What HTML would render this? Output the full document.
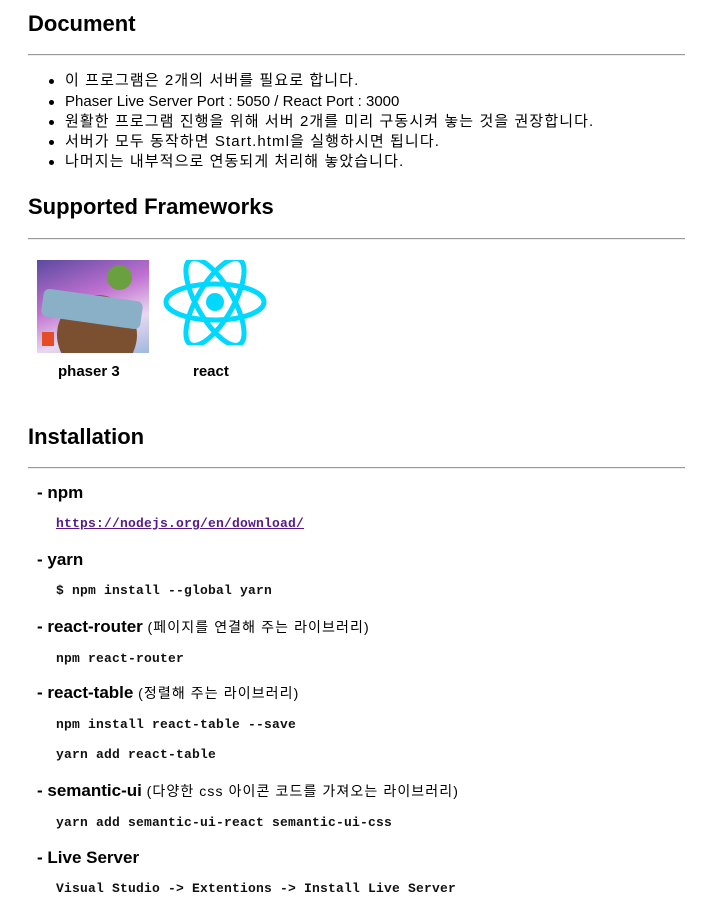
<!DOCTYPE html>
<html><head><meta charset="utf-8"><style>
body{margin:0;width:705px;height:917px;background:#fff;position:relative;font-family:"Liberation Sans","Noto Sans CJK KR",sans-serif;color:#000;overflow:hidden}
.a{position:absolute;white-space:nowrap;line-height:20px}
h2{position:absolute;margin:0;left:28px;font-size:22px;font-weight:bold;line-height:28px}
.hr{position:absolute;left:28px;width:657px;height:1px;background:#999;border-bottom:1px solid #eee}
.li{left:65px;font-size:15px}
.k{letter-spacing:1.1px}
.li:before{content:"";position:absolute;left:-16px;top:8px;width:5px;height:5px;border-radius:50%;background:#000}
.h{left:37px;font-size:17px;font-weight:bold}
.h small{font-size:14px;font-weight:normal;letter-spacing:1.1px}
.c{left:56px;font-family:"Liberation Mono","Noto Sans CJK KR",monospace;font-size:13px;font-weight:bold;color:#111;letter-spacing:0.2px}
a{color:#551a8b}
</style></head><body>
<h2 style="top:10px">Document</h2>
<div class="hr" style="top:54px"></div>
<div class="a li k" style="top:71px">이 프로그램은 2개의 서버를 필요로 합니다.</div>
<div class="a li" style="top:92px">Phaser Live Server Port : 5050 / React Port : 3000</div>
<div class="a li k" style="top:112px">원활한 프로그램 진행을 위해 서버 2개를 미리 구동시켜 놓는 것을 권장합니다.</div>
<div class="a li k" style="top:132px">서버가 모두 동작하면 Start.html을 실행하시면 됩니다.</div>
<div class="a li k" style="top:152px">나머지는 내부적으로 연동되게 처리해 놓았습니다.</div>
<h2 style="top:193px">Supported Frameworks</h2>
<div class="hr" style="top:238px"></div>
<div style="position:absolute;left:37px;top:260px;width:112px;height:93px;background:linear-gradient(160deg,#5a4aa0,#c070d0 40%,#e8d8f0 70%,#a0b8e0);overflow:hidden">
<div style="position:absolute;left:20px;top:35px;width:80px;height:80px;border-radius:50%;background:#7a5030"></div>
<div style="position:absolute;left:5px;top:35px;width:100px;height:28px;background:#8ab0c8;border-radius:6px;transform:rotate(8deg)"></div>
<div style="position:absolute;left:5px;top:72px;width:12px;height:14px;background:#e44d26"></div>
<div style="position:absolute;left:70px;top:5px;width:25px;height:25px;border-radius:50%;background:#6aa040"></div>
</div>
<svg style="position:absolute;left:162px;top:260px" width="106" height="85" viewBox="0 0 106 85">
<g fill="none" stroke="#00d8ff" stroke-width="5"><ellipse cx="53" cy="42" rx="49" ry="18"/><ellipse cx="53" cy="42" rx="49" ry="18" transform="rotate(60 53 42)"/><ellipse cx="53" cy="42" rx="49" ry="18" transform="rotate(120 53 42)"/></g>
<circle cx="53" cy="42" r="9" fill="#00d8ff"/></svg>
<div class="a" style="left:58px;top:362px;font-size:15px;font-weight:bold">phaser 3</div>
<div class="a" style="left:193px;top:362px;font-size:15px;font-weight:bold">react</div>
<h2 style="top:423px">Installation</h2>
<div class="hr" style="top:467px"></div>
<div class="a h" style="top:483px">- npm</div>
<div class="a c" style="top:514px"><a href="#">https://nodejs.org/en/download/</a></div>
<div class="a h" style="top:550px">- yarn</div>
<div class="a c" style="top:581px">$ npm install --global yarn</div>
<div class="a h" style="top:617px">- react-router <small>(페이지를 연결해 주는 라이브러리)</small></div>
<div class="a c" style="top:649px">npm react-router</div>
<div class="a h" style="top:683px">- react-table <small>(정렬해 주는 라이브러리)</small></div>
<div class="a c" style="top:715px">npm install react-table --save</div>
<div class="a c" style="top:745px">yarn add react-table</div>
<div class="a h" style="top:781px">- semantic-ui <small>(다양한 css 아이콘 코드를 가져오는 라이브러리)</small></div>
<div class="a c" style="top:813px">yarn add semantic-ui-react semantic-ui-css</div>
<div class="a h" style="top:848px">- Live Server</div>
<div class="a c" style="top:879px">Visual Studio -&gt; Extentions -&gt; Install Live Server</div>
</body></html>
